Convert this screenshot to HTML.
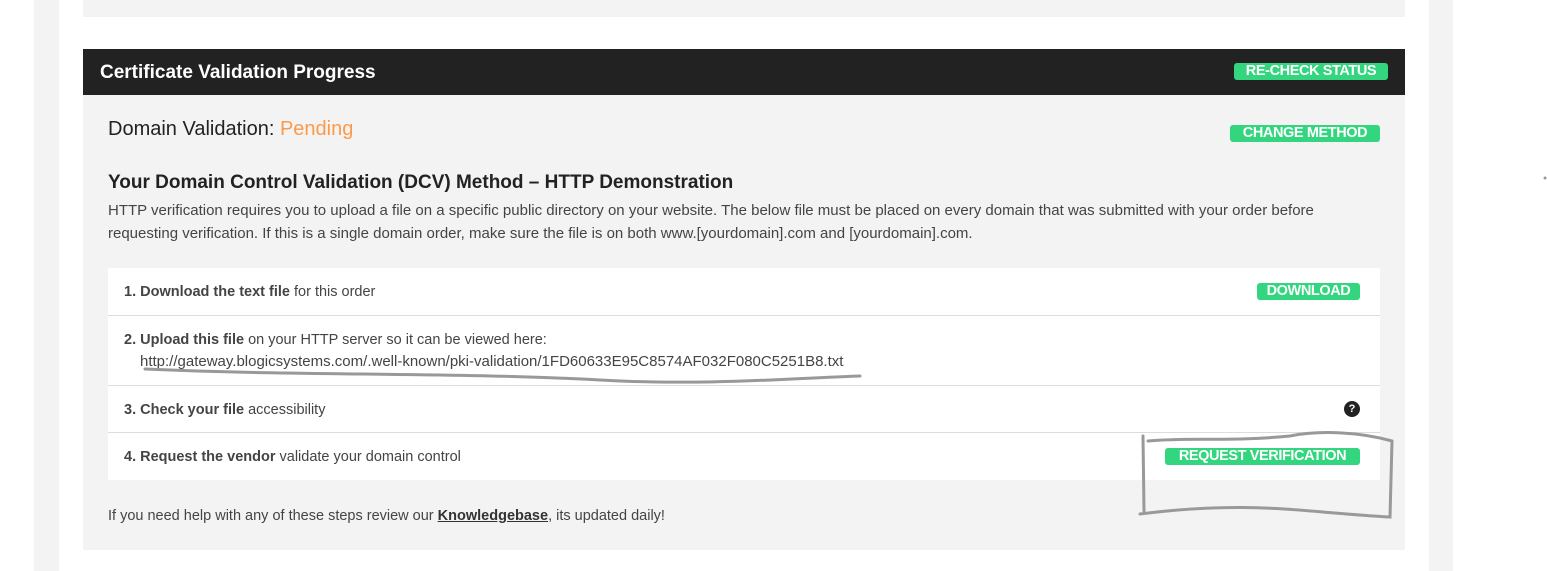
<!DOCTYPE html><html><head><style>
body{margin:0;width:1547px;height:571px;background:#fff;font-family:"Liberation Sans",sans-serif;position:relative;overflow:hidden;color:#333}
.a{position:absolute}
.btn{position:absolute;background:#33d67e;color:#fff;font-weight:bold;font-size:14.5px;border-radius:3px;line-height:17px;text-align:center;letter-spacing:-0.4px}
.row{position:absolute;left:108px;width:1272px;background:#fff;border-bottom:1px solid #ddd;font-size:14.5px;color:#444}
.row span.t{position:absolute;left:16px}
</style></head><body>
<div class="a" style="left:34px;top:0;width:25px;height:571px;background:#f3f3f3"></div>
<div class="a" style="left:1429px;top:0;width:24px;height:571px;background:#f3f3f3"></div>
<div class="a" style="left:83px;top:0;width:1322px;height:17px;background:#f3f3f3"></div>
<div class="a" style="left:83px;top:49px;width:1322px;height:46px;background:#222"></div>
<div class="a" style="left:100px;top:62px;color:#fff;font-size:19px;font-weight:bold">Certificate Validation Progress</div>
<div class="btn" style="left:1234px;top:63px;width:154px">RE-CHECK STATUS</div>
<div class="a" style="left:83px;top:95px;width:1322px;height:455px;background:#f3f3f3"></div>
<div class="a" style="left:108px;top:118px;font-size:20px;color:#222">Domain Validation: <span style="color:#fd9a4a">Pending</span></div>
<div class="btn" style="left:1230px;top:125px;width:150px">CHANGE METHOD</div>
<div class="a" style="left:108px;top:172px;font-size:19px;font-weight:bold;color:#222">Your Domain Control Validation (DCV) Method – HTTP Demonstration</div>
<div class="a" style="left:108px;top:200px;font-size:15px;line-height:22.5px;color:#444;width:1240px">HTTP verification requires you to upload a file on a specific public directory on your website. The below file must be placed on every domain that was submitted with your order before requesting verification. If this is a single domain order, make sure the file is on both www.[yourdomain].com and [yourdomain].com.</div>
<div class="row" style="top:268px;height:47px"><span class="t" style="top:16px"><b>1. Download the text file</b> for this order</span><div class="btn" style="left:1149px;top:15px;width:103px">DOWNLOAD</div></div>
<div class="row" style="top:316px;height:69px"><span class="t" style="top:16px"><b>2. Upload this file</b> on your HTTP server so it can be viewed here:</span><span class="a" style="left:32px;top:37px;font-size:15px">http://gateway.blogicsystems.com/.well-known/pki-validation/1FD60633E95C8574AF032F080C5251B8.txt</span></div>
<div class="row" style="top:386px;height:46px"><span class="t" style="top:16px"><b>3. Check your file</b> accessibility</span><div class="a" style="left:1236px;top:15px;width:16px;height:16px;border-radius:50%;background:#222;color:#fff;font-size:11px;font-weight:bold;text-align:center;line-height:16px">?</div></div>
<div class="row" style="top:433px;height:47px;border:none"><span class="t" style="top:16px"><b>4. Request the vendor</b> validate your domain control</span><div class="btn" style="left:1057px;top:15px;width:195px">REQUEST VERIFICATION</div></div>
<div class="a" style="left:108px;top:508px;font-size:14.5px;color:#444">If you need help with any of these steps review our <b style="text-decoration:underline;color:#333">Knowledgebase</b>, its updated daily!</div>
<svg class="a" style="left:0;top:0" width="1547" height="571"><g fill="none" stroke="#999" stroke-width="3" stroke-linecap="round">
<path d="M145 369 C300 376 450 372 600 380 C700 386 800 378 860 376"/>
<path d="M1143 436 L1144 511 M1140 514 C1250 500 1300 512 1390 517 L1392 441 C1360 432 1320 430 1290 436 C1230 442 1190 437 1148 441"/>
</g><circle cx="1545" cy="178" r="1.5" fill="#999"/></svg>
</body></html>
